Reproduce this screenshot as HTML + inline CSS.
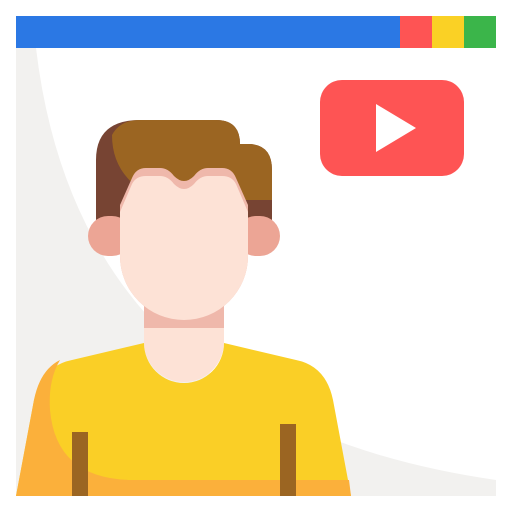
<!DOCTYPE html><html><head><style>html,body{margin:0;padding:0;background:#fff}</style></head><body>
<svg width="512" height="512" viewBox="0 0 512 512" xmlns="http://www.w3.org/2000/svg">
<rect width="512" height="512" fill="#fff"/>
<rect x="16" y="48" width="480" height="448" fill="#f2f1ef"/>
<path d="M36 48 Q80 420 496 480 L496 48 Z" fill="#fff"/>
<rect x="16" y="16" width="384" height="32" fill="#2b78e4"/>
<rect x="400" y="16" width="32" height="32" fill="#fe5454"/>
<rect x="432" y="16" width="32" height="32" fill="#fad125"/>
<rect x="464" y="16" width="32" height="32" fill="#3bb54a"/>
<rect x="320" y="80" width="144" height="96" rx="22" fill="#fe5454"/>
<path d="M376 104 L416 128 L376 152 Z" fill="#fff"/>
<!-- hair -->
<path d="M96 220 L96 160 Q96 120 140 120 L216 120 Q240 120 240 144 L248 144 Q272 144 272 170 L272 220 Z" fill="#774433"/>
<path d="M112 135 Q120 120 140 120 L216 120 Q240 120 240 144 L248 144 Q272 144 272 170 L272 200 L230 200 L160 200 Q112 180 112 135 Z" fill="#9b6522"/>
<!-- ears -->
<rect x="88" y="216" width="44" height="40" rx="20" fill="#eca595"/>
<rect x="236" y="216" width="44" height="40" rx="20" fill="#eca595"/>
<!-- neck -->
<rect x="144" y="290" width="80" height="40" fill="#efb8ab"/>
<path d="M144 328 L224 328 L224 342 A40 40 0 0 1 144 342 Z" fill="#fde2d6"/>
<!-- shirt -->
<path d="M16 496 L34 400 Q42 366 72 360 L144 343 A40 40 0 0 0 224 343 L296 360 Q326 366 333 400 L351 496 Z" fill="#facf26"/>
<path d="M16 496 L34 400 Q40 370 60 360 Q48 380 50 410 Q56 478 130 480 L349 480 L351 496 Z" fill="#fbb03b"/>
<rect x="72" y="432" width="16" height="64" fill="#9b6522"/>
<rect x="280" y="424" width="16" height="72" fill="#9b6522"/>
<!-- face -->
<path d="M120 205 L132 178 Q136 168 146 168 L160 168 Q168 168 174 176 Q184 186 194 176 Q200 168 208 168 L222 168 Q232 168 236 178 L248 205 L248 256 A64 64 0 0 1 120 256 Z" fill="#efb8ab"/>
<path d="M120 212 L132 184 Q136 176 146 176 L160 176 Q168 176 174 184 Q184 194 194 184 Q200 176 208 176 L222 176 Q232 176 236 184 L248 212 L248 256 A64 64 0 0 1 120 256 Z" fill="#fde2d6"/>
</svg>
</body></html>
